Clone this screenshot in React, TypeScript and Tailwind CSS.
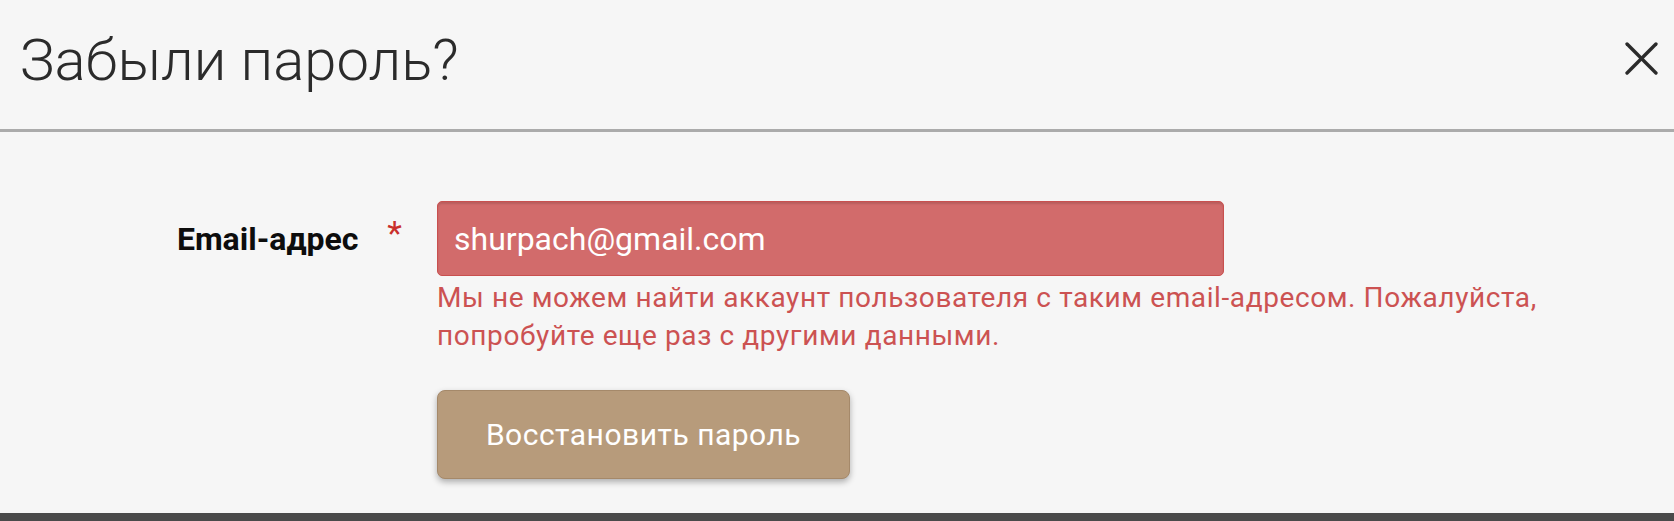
export default function App() {
  return (
    <div className="min-h-screen bg-[#f6f6f6] font-['Roboto','Liberation_Sans',sans-serif] flex flex-col">
      {/* шапка */}
      <div className="h-[132px] flex justify-between items-start pl-[20px] pr-[16px] pt-[25px] border-b-[3px] border-[#ababab]">
        <h1 className="text-[58px] leading-[70px] font-light text-[#2b2b2b]">Забыли пароль?</h1>
        <button className="mt-[17px] text-[#2b2b2b]" aria-label="Закрыть">
          <svg width="33" height="33" viewBox="0 0 32 32" fill="none" stroke="currentColor" strokeWidth="3.3" strokeLinecap="round">
            <line x1="2" y1="2" x2="30" y2="30" />
            <line x1="30" y1="2" x2="2" y2="30" />
          </svg>
        </button>
      </div>

      {/* форма */}
      <div className="flex pt-[69px] pb-[34px]">
        <div className="w-[437px] h-[75px] flex justify-end items-center pr-[35px]">
          <label className="text-[32px] font-bold text-[#0d0d0d]">Email-адрес</label>
          <span className="self-start mt-[15px] ml-[29px] text-[34px] leading-[34px] text-[#c9302c]">*</span>
        </div>
        <div className="w-[1180px] flex flex-col items-start">
          <input
            type="email"
            defaultValue="shurpach@gmail.com"
            className="w-[787px] h-[75px] rounded-[5px] border border-[#c9504f] bg-[#d26b6b] pl-[16px] text-[32px] text-white shadow-[inset_0_2px_2px_rgba(0,0,0,0.12)] outline-none"
          />
          <p className="mt-[3px] text-[28px] leading-[38px] tracking-[0.6px] text-[#cc5252]">
            Мы не можем найти аккаунт пользователя с таким email-адресом. Пожалуйста, попробуйте еще раз с другими данными.
          </p>
          <button className="mt-[35px] w-[413px] h-[89px] rounded-[8px] border border-[#a5896a] bg-[#b79b7b] text-[30px] tracking-[0.5px] text-white shadow-[0_3px_6px_rgba(0,0,0,0.3)]">
            Восстановить пароль
          </button>
        </div>
      </div>

      <div className="h-[40px] bg-[#4a4a4a]" />
    </div>
  );
}
